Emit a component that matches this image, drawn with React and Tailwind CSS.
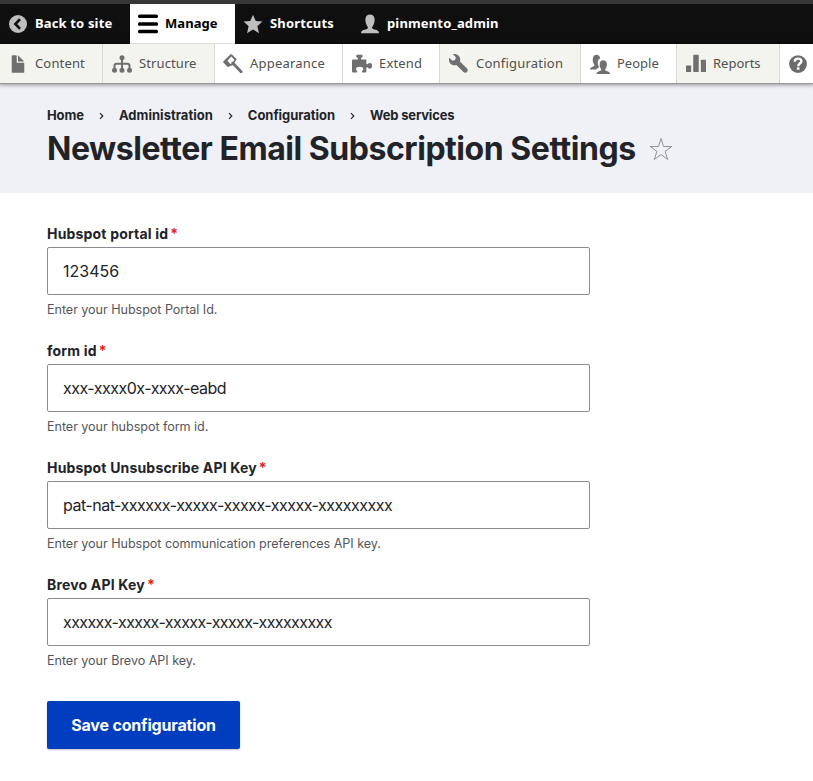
const Svg = ({ size = 20, className = '', children }) => (
  <svg width={size} height={size} viewBox="0 0 16 16" fill="currentColor" className={`shrink-0 ${className}`} aria-hidden="true">
    {children}
  </svg>
);

const BackIcon = () => (
  <Svg className="text-[#bebebe]">
    <circle cx="8" cy="8" r="7.2" />
    <path d="M9.6 4.1 5.9 8l3.7 3.9" fill="none" stroke="#0f0f0f" strokeWidth="2.1" />
  </Svg>
);
const MenuIcon = () => (
  <Svg>
    <rect y="0.4" width="16" height="2.8" rx="1.2" />
    <rect y="6.5" width="16" height="2.8" rx="1.2" />
    <rect y="12.6" width="16" height="2.8" rx="1.2" />
  </Svg>
);
const StarIcon = () => (
  <Svg className="text-[#bebebe]">
    <path d="M8 .5l2.200 5 5.300.5-4 3.700 1.300 5.600L8 12.300l-4.800 3 1.300-5.600L.5 6l5.300-.5z" />
  </Svg>
);
const PersonIcon = () => (
  <Svg className="text-[#bebebe]">
    <path d="M.8 15.3c0-1.6 1-2.2 2.6-2.7 1.8-.5 2.9-.8 2.9-1.7 0-.8-.7-1.4-1.2-2.5C4.5 7 4.2 5.6 4.3 4.1 4.4 1.6 5.8.3 8 .3s3.6 1.3 3.7 3.8c.1 1.5-.2 2.9-.8 4.3-.5 1.1-1.2 1.7-1.2 2.5 0 .9 1.1 1.2 2.9 1.7 1.6.5 2.6 1.100 2.6 2.700z" />
  </Svg>
);
const FileIcon = () => (
  <Svg>
    <path d="M12.502 7h-5c-.276 0-.502-.225-.502-.5v-5c0-.275-.225-.5-.5-.5h-3c-.276 0-.5.225-.5.5v13.029c0 .275.225.5.5.5h9.002c.275 0 .5-.225.5-.5v-7.029c0-.275-.225-.5-.5-.5zM8.502 6h4c.275 0 .34-.159.146-.354l-4.293-4.292c-.195-.195-.353-.129-.353.146v4c0 .275.225.5.5.5z" />
  </Svg>
);
const StructureIcon = () => (
  <Svg>
    <circle cx="8" cy="3" r="2" />
    <circle cx="2" cy="13" r="2" />
    <circle cx="8" cy="13" r="2" />
    <circle cx="14" cy="13" r="2" />
    <path d="M8 3v10M2 13V9.5C2 8.500 2.700 7.800 3.700 7.800h8.600c1 0 1.700.7 1.700 1.700V13" fill="none" stroke="currentColor" strokeWidth="1.600" />
  </Svg>
);
const BrushIcon = () => (
  <Svg>
    <path fillRule="evenodd" d="M5.6.5.3 5.8c-.3.3-.3.7 0 1l3.200 3.300c.3.300.6.300.9 0l2-.8 1.600-.5L9.800 5.900c.3-.8.600-.9.900-1.200.3-.3.300-.6 0-.9L7.300.500c-.5-.5-1.200-.5-1.700 0zM6.700 1.900 3.500 5.300l2.400 2.700 1.400-.6 1-1.500.8-1.300z" />
    <path d="m7.800 7.200 6.700 7" fill="none" stroke="currentColor" strokeWidth="2.200" strokeLinecap="round" />
  </Svg>
);
const PuzzleIcon = () => (
  <Svg>
    <path d="M0 5.2c0-.5.3-.8.8-.8h3.4c.6 0 .8-.6.5-1.100C4.300 2.900 3.400 2.500 3.400 1.700c0-.7.4-1.100 1.100-1.100h2.900c.7 0 1.100.4 1.100 1.100 0 .8-.9 1.200-1.300 1.600-.3.500-.1 1.100.5 1.100h3.100c.4 0 .7.300.7.800v2.400c0 .6.500.8 1 .4.600-.5 1-.9 1.900-.9 1.100 0 1.700 1 1.700 2.300s-.6 2.300-1.700 2.300c-.9 0-1.300-.4-1.900-.9-.5-.4-1-.2-1 .4v2.700c0 .5-.3.800-.7.800H8.500c-.5 0-.8-.5-.4-1 .5-.6.900-.9.900-1.700 0-1.100-1.200-1.800-2.900-1.800S3.200 10.900 3.200 12c0 .8.400 1.100.9 1.700.4.500.1 1-.4 1H.8c-.5 0-.8-.3-.8-.8z" />
  </Svg>
);
const WrenchIcon = () => (
  <Svg>
    <path d="M14.416 11.586l-5.666-5.667c.15-.449.252-.921.252-1.419 0-2.485-2.016-4.5-4.502-4.5-.505 0-.981.102-1.434.255l2.431 2.431-.588 2.196-2.196.588-2.445-2.445c-.162.464-.268.956-.268 1.475 0 2.486 2.014 4.5 4.5 4.5.5 0 .972-.102 1.421-.251l5.667 5.665c.781.781 2.047.781 2.828 0s.781-2.047 0-2.828z" />
  </Svg>
);
const PeopleIcon = () => (
  <Svg>
    <path d="M6.7 10.9c-1 .5-1.7 1-1.9 1.500H.1c-.1-1.200.4-1.700 1.500-2.100 1.200-.4 2-.5 2-1.300 0-.6-.5-.9-.9-1.800-.4-1-.6-1.900-.5-3C2.300 1.700 3.500.6 5.200.6c1.600 0 2.700 1 2.900 2.700-1.500.8-2.100 2.200-1.900 4 .1 1 .4 1.800.8 2.400.3.500.3.900-.3 1.200z" />
    <path d="M5.200 15.900c0-1.200.8-1.700 2-2.100 1.200-.4 1.900-.6 1.900-1.200 0-.6-.5-1-.9-1.800-.4-1-.6-1.800-.5-2.900.1-1.900 1.200-3 2.900-3s2.800 1.100 2.900 3c.1 1.100-.1 1.900-.5 2.900-.4.800-.9 1.200-.9 1.800 0 .6.700.8 1.900 1.200 1.200.4 2 .9 2 2.100z" />
  </Svg>
);
const ReportsIcon = () => (
  <Svg>
    <rect y="9.2" width="4.1" height="5.2" rx=".5" />
    <rect x="5.8" y="0.6" width="4.4" height="13.8" rx=".5" />
    <rect x="11.9" y="4.500" width="4.1" height="9.900" rx=".5" />
  </Svg>
);
const HelpIcon = () => (
  <Svg>
    <circle cx="8" cy="8" r="7.1" />
    <path d="M5.4 6.1C5.4 4.6 6.5 3.7 8.1 3.7c1.5 0 2.6.8 2.6 2.1 0 1.9-2.500 1.800-2.500 3.900" fill="none" stroke="#fff" strokeWidth="1.9" />
    <rect x="7.1" y="10.700" width="2.100" height="1.900" fill="#fff" />
  </Svg>
);

const barItems = [
  { label: 'Back to site', Icon: BackIcon, cls: 'w-[130px] pl-2 text-white', text: 'ml-[7px] tracking-[0.15px]' },
  { label: 'Manage', Icon: MenuIcon, cls: 'w-[105px] border-b border-[#ddd] bg-white pl-2 text-black', text: 'ml-[7px] tracking-[0.05px]' },
  { label: 'Shortcuts', Icon: StarIcon, cls: 'w-[117px] pl-2 text-white', text: 'ml-[7px] tracking-[0.15px]' },
  { label: 'pinmento_admin', Icon: PersonIcon, cls: 'w-[160px] pl-2 text-white', text: 'ml-[7px] tracking-[0.15px]' },
];

const trayItems = [
  { label: 'Content', Icon: FileIcon, cls: 'w-[103px] bg-[#f3f4ee] pl-2', text: 'ml-[7px] tracking-[0.15px]' },
  { label: 'Structure', Icon: StructureIcon, cls: 'w-[112px] bg-[#f3f4ee] pl-[9px]', text: 'ml-[7px] tracking-[0.1px]' },
  { label: 'Appearance', Icon: BrushIcon, cls: 'w-[128px] bg-white pl-2', text: 'ml-[7px] tracking-[0.2px]' },
  { label: 'Extend', Icon: PuzzleIcon, cls: 'w-[97px] bg-white pl-[9px]', text: 'ml-[7px] tracking-[0.15px]' },
  { label: 'Configuration', Icon: WrenchIcon, cls: 'w-[141px] bg-[#f3f4ee] pl-[9px]', text: 'ml-[7px] tracking-[0.22px]' },
  { label: 'People', Icon: PeopleIcon, cls: 'w-[96px] bg-white pl-[9px]', text: 'ml-[7px]' },
  { label: 'Reports', Icon: ReportsIcon, cls: 'w-[103px] bg-[#f3f4ee] pl-[9px]', text: 'ml-[7px]' },
];

const crumbs = [
  { label: 'Home', text: 'tracking-[-0.1px]' },
  { label: 'Administration', text: 'tracking-[0.02px]' },
  { label: 'Configuration', text: 'tracking-[-0.05px]' },
  { label: 'Web services', text: 'tracking-[-0.17px]' },
];

const fields = [
  { label: 'Hubspot portal id', value: '123456', track: '', help: 'Enter your Hubspot Portal Id.' },
  { label: 'form id', value: 'xxx-xxxx0x-xxxx-eabd', track: 'tracking-[-0.51px]', help: 'Enter your hubspot form id.' },
  { label: 'Hubspot Unsubscribe API Key', value: 'pat-nat-xxxxxx-xxxxx-xxxxx-xxxxx-xxxxxxxxx', track: 'tracking-[-0.5px]', help: 'Enter your Hubspot communication preferences API key.' },
  { label: 'Brevo API Key', value: 'xxxxxx-xxxxx-xxxxx-xxxxx-xxxxxxxxx', track: 'tracking-[-0.58px]', help: 'Enter your Brevo API key.' },
];

export default function App() {
  return (
    <div className="h-[781px] w-full overflow-hidden bg-white font-['Inter',sans-serif] text-[#222328]">
      <div className="relative font-['Noto_Sans',sans-serif] text-[13px] whitespace-nowrap">
        <nav className="flex h-11 border-t-4 border-[#363636] bg-[#0f0f0f] font-bold">
          {barItems.map(({ label, Icon, cls, text }) => (
            <a key={label} className={`flex shrink-0 items-center ${cls}`}>
              <Icon />
              <span className={text}>{label}</span>
            </a>
          ))}
        </nav>
        <nav className="flex h-10 overflow-hidden border-b border-[#999] bg-white text-[#505050] shadow-[0_0_4px_1px_rgba(0,0,0,0.4)]">
          {trayItems.map(({ label, Icon, cls, text }) => (
            <a key={label} className={`flex shrink-0 items-center border-r border-[#d8d8d8] ${cls}`}>
              <span className="text-[#707070]"><Icon /></span>
              <span className={text}>{label}</span>
            </a>
          ))}
          <a className="flex shrink-0 items-center pl-2 text-[#6b6b6b]"><HelpIcon /></a>
        </nav>
      </div>

      <header className="h-[109px] bg-[#f0f1f7] pl-[47px] whitespace-nowrap">
        <nav className="flex h-[46px] items-center pt-[18px] text-[13px] font-bold">
          {crumbs.map(({ label, text }, i) => (
            <span key={label} className="flex items-center">
              {i > 0 && (
                <svg width="5" height="8" viewBox="0 0 5 8" className="mx-[15px]" fill="none" stroke="currentColor" strokeWidth="1.2">
                  <path d="M1 1.2 3.8 4 1 6.8" />
                </svg>
              )}
              <span className={text}>{label}</span>
            </span>
          ))}
        </nav>
        <div className="flex h-[38px] items-center">
          <h1 className="text-[32px] font-bold tracking-[-0.46px]">Newsletter Email Subscription Settings</h1>
          <svg width="24" height="24" viewBox="0 0 24 24" className="ml-[13px] text-[#8e929c]" fill="none" stroke="currentColor">
            <path d="m12 1.500 2.500 8h8.300l-6.700 4.900 2.600 8.100-6.700-5-6.700 5 2.600-8.100-6.700-4.900h8.300z" />
          </svg>
        </div>
      </header>

      <main className="pt-8 pl-[47px]">
        {fields.map(({ label, value, track, help }) => (
          <div key={label} className="h-[117px] w-[543px]">
            <label className="flex h-[22px] items-center pb-1 text-sm font-bold tracking-[0.18px]">
              {label}
              <span className="ml-[2px] text-[#dc2323]">*</span>
            </label>
            <input
              defaultValue={value}
              className={`block h-12 w-full rounded-[2px] border border-[#8a8b91] bg-white px-[15px] text-base outline-none ${track}`}
            />
            <p className="mt-[6px] text-[12.6px] leading-[18px] tracking-[-0.05px] text-[#55565b]">{help}</p>
          </div>
        ))}
        <button className="mt-2 h-12 w-[193px] rounded-[2px] bg-[#003ebf] text-base font-bold tracking-[-0.17px] text-white shadow-[0_1px_2px_rgba(0,0,0,0.25)]">
          Save configuration
        </button>
      </main>
    </div>
  );
}
